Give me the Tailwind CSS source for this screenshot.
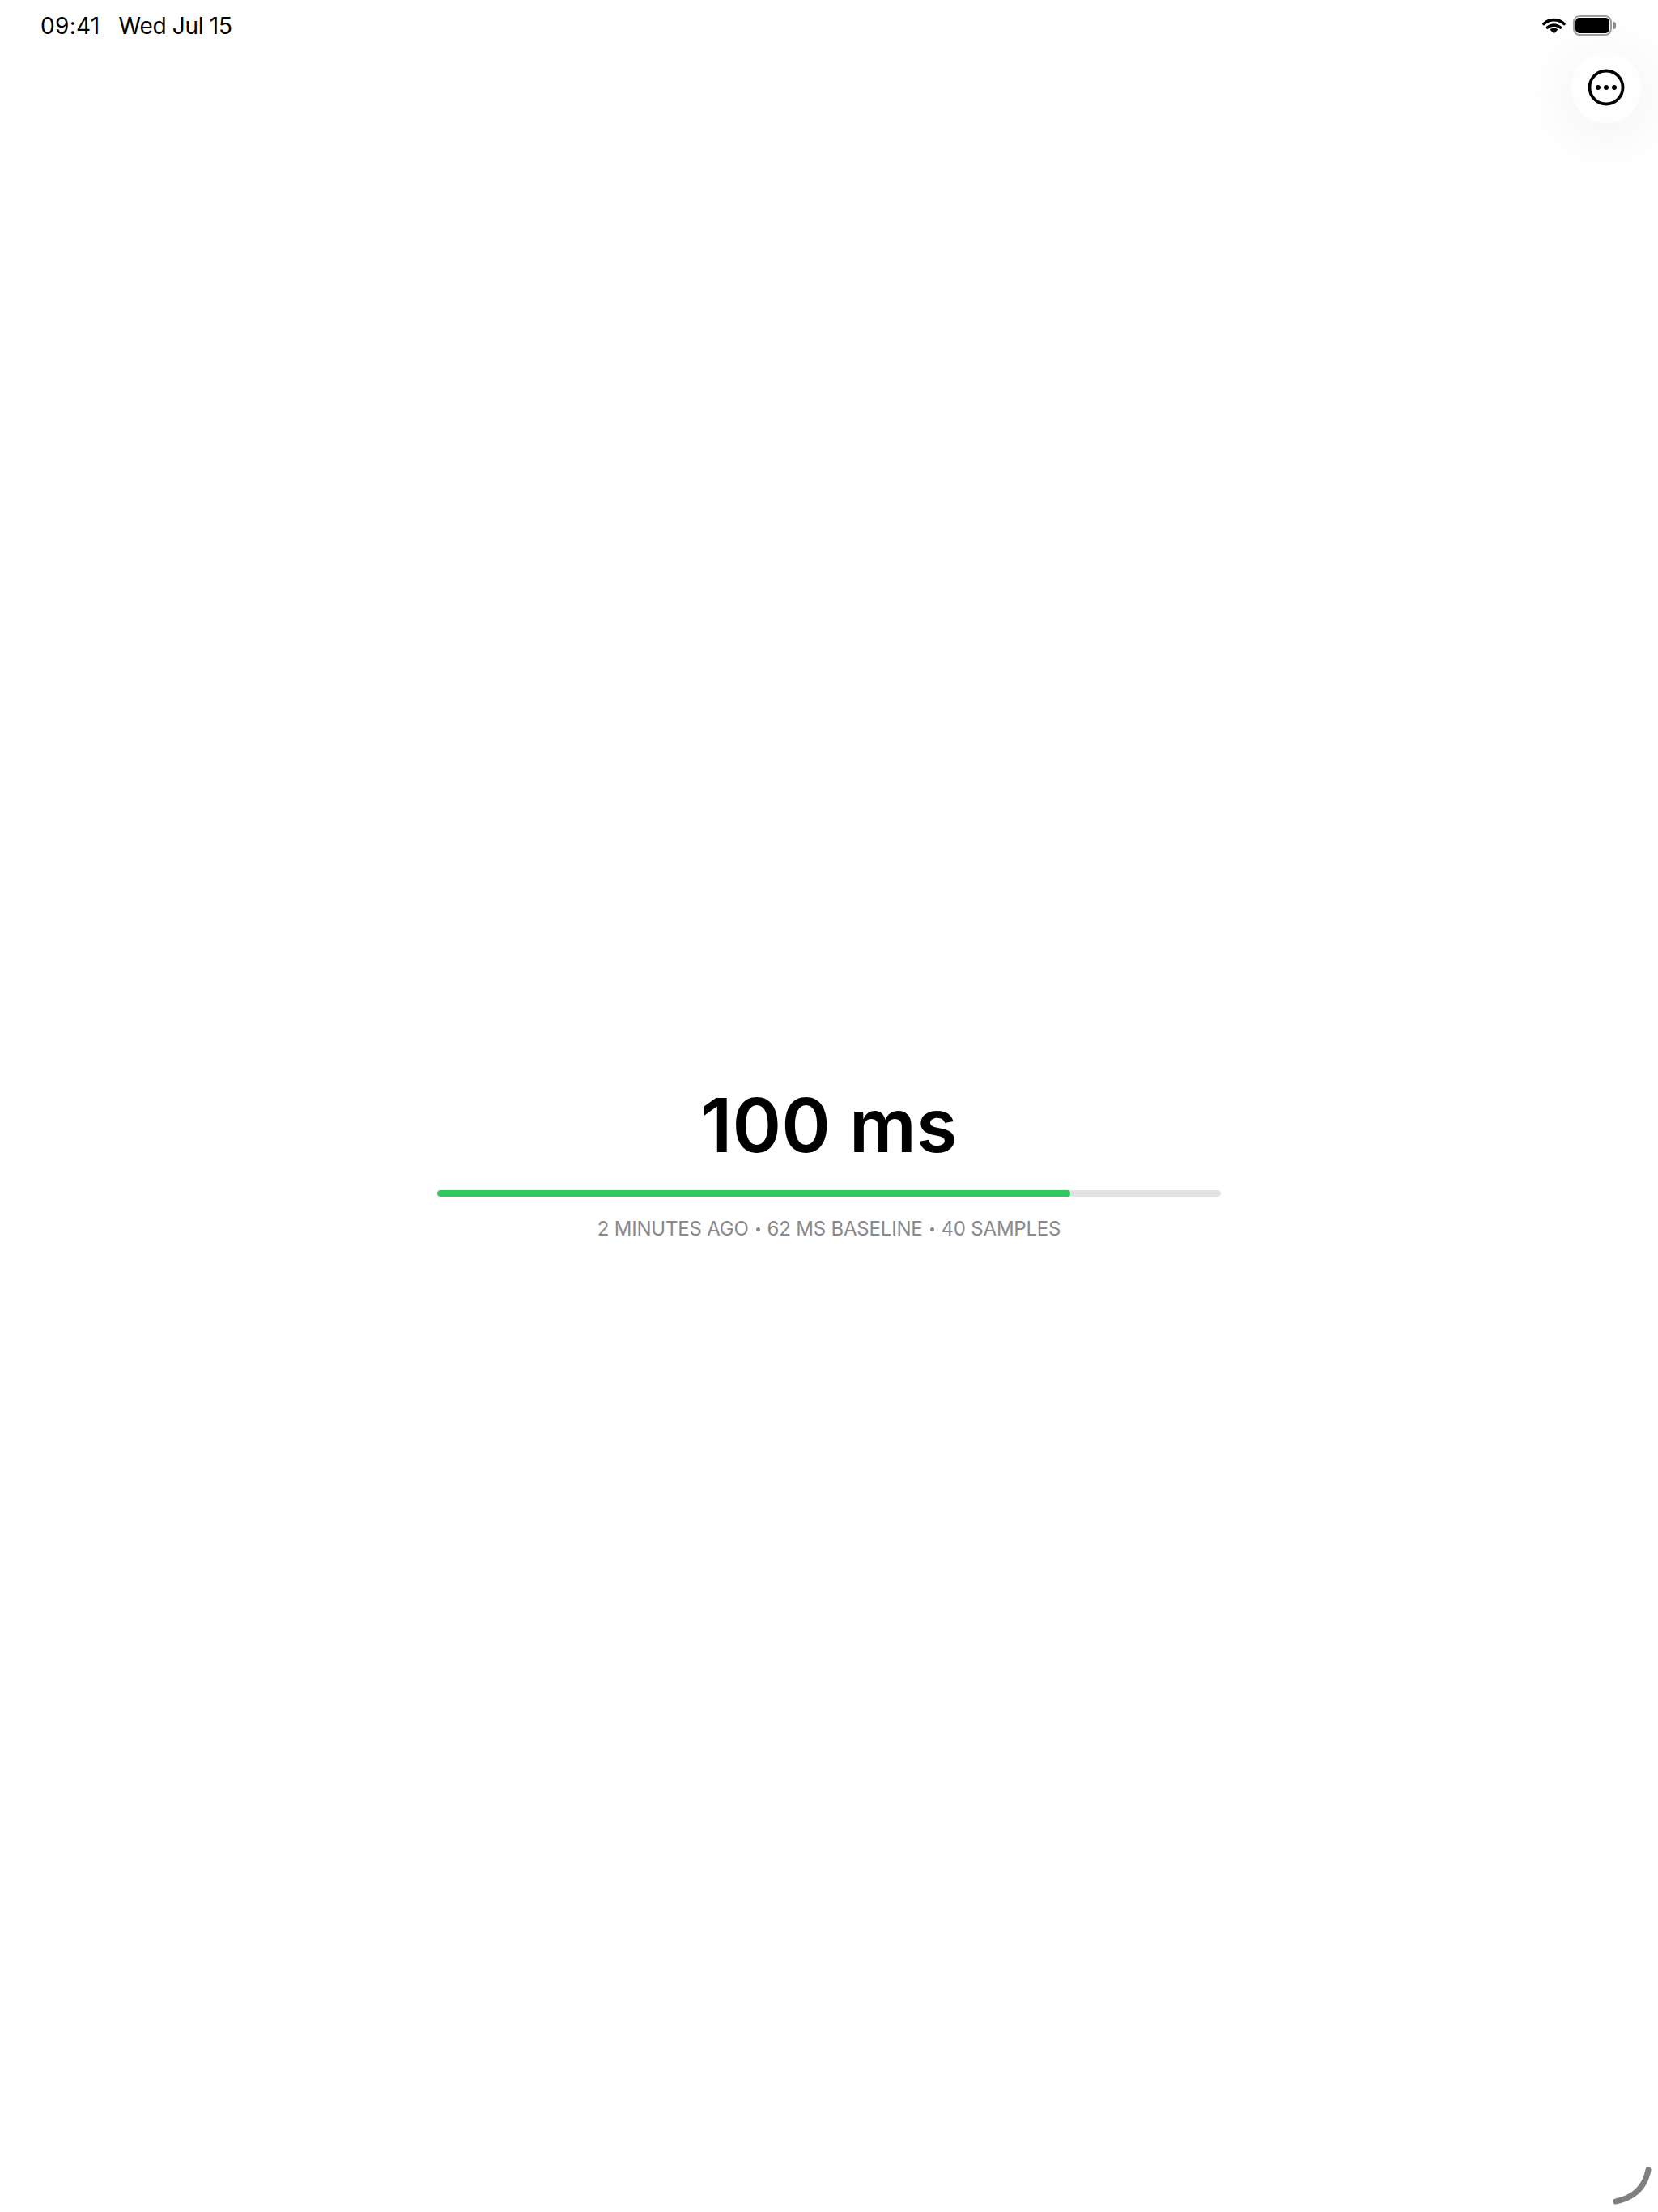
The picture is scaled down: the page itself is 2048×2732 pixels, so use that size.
<!DOCTYPE html>
<html lang="en">
<head>
  <meta charset="UTF-8">
  <meta name="viewport" content="width=device-width, initial-scale=1.0">
  <title>Latency</title>
  <script src="https://cdn.jsdelivr.net/npm/@tailwindcss/browser@4"></script>
</head>
<body class="bg-white font-['Inter',sans-serif]">
  <div class="relative h-[2732px] w-[2048px] overflow-hidden">
    <!-- status bar -->
    <div class="flex h-[64px] items-start justify-between pl-[50px] pr-[52px] pt-[14px] text-[28px] leading-[36px] text-black">
      <div class="flex gap-[23px]">
        <span class="tracking-[0.3px]">09:41</span>
        <span class="tracking-[-0.3px]">Wed Jul 15</span>
      </div>
      <div class="flex items-center gap-[9px] pt-[5px]">
        <svg class="h-[20px] w-[29px]" viewBox="0 0 29 20">
          <path d="M2 7.5 A18.5 18.5 0 0 1 27 7.5" fill="none" stroke="black" stroke-width="3.6" stroke-linecap="round"/>
          <path d="M6.5 12 A12 12 0 0 1 22.5 12" fill="none" stroke="black" stroke-width="3.6" stroke-linecap="round"/>
          <path d="M14.5 19.5 L9.5 14.5 A7 7 0 0 1 19.5 14.5 Z" fill="black"/>
        </svg>
        <div class="flex items-center gap-[2px]">
          <div class="flex h-[25px] w-[48px] items-center justify-center rounded-[8px] border-2 border-[#a0a0a0]">
            <div class="h-[19px] w-[42px] rounded-[5px] bg-black"></div>
          </div>
          <div class="h-[9px] w-[3px] rounded-r-[3px] bg-[#8e8e8e]"></div>
        </div>
      </div>
    </div>

    <!-- menu button -->
    <div class="absolute left-[1940px] top-[64px] flex h-[88px] w-[88px] items-center justify-center rounded-full bg-[#fefefe] shadow-[0_10px_80px_rgba(0,0,0,0.08)]">
      <svg class="h-[46px] w-[46px]" viewBox="0 0 46 46">
        <circle cx="23" cy="23" r="20.5" fill="none" stroke="black" stroke-width="3.8"/>
        <circle cx="13" cy="23" r="3" fill="black"/>
        <circle cx="23" cy="23" r="3" fill="black"/>
        <circle cx="33" cy="23" r="3" fill="black"/>
      </svg>
    </div>

    <!-- reading -->
    <div class="mt-[1268px] flex flex-col items-center">
      <div class="text-[92px] font-semibold leading-[116px] text-black">100 ms</div>
      <div class="mt-[22px] h-[8px] w-[968px] overflow-hidden rounded-full bg-[#e3e3e3]">
        <div class="h-full w-[782px] rounded-full bg-[#30c85a]"></div>
      </div>
      <div class="mt-[24px] flex items-center gap-[9px] text-[24px] leading-[32px] tracking-[-0.2px] text-[#8a8a8e]">
        <span>2 MINUTES AGO</span>
        <span class="h-[5px] w-[5px] rounded-full bg-[#8a8a8e]"></span>
        <span>62 MS BASELINE</span>
        <span class="h-[5px] w-[5px] rounded-full bg-[#8a8a8e]"></span>
        <span>40 SAMPLES</span>
      </div>
    </div>

    <!-- corner grabber -->
    <svg class="absolute bottom-0 right-0 h-[82px] w-[88px]" viewBox="0 0 88 82">
      <path d="M76 30 Q70 62 36 69" fill="none" stroke="#7f7f7f" stroke-width="7" stroke-linecap="round"/>
    </svg>
  </div>
</body>
</html>
